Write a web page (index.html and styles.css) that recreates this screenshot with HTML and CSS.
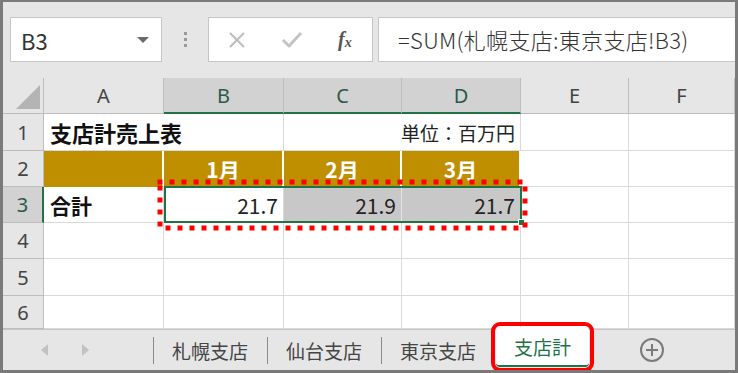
FILE: index.html
```html
<!DOCTYPE html>
<html>
<head>
    <meta charset="utf-8">
    <link rel="stylesheet" href="styles.css">
</head>
<body>
    <div class="frame">
        <div class="topbar">
            <div class="namebox">
                <span>B3</span>
                <span class="caret"></span>
            </div>
            <div class="grip">
                <span></span><span></span><span></span>
            </div>
            <div class="fxbox">
                <svg class="icon" width="22" height="22" viewBox="0 0 22 22" fill="none" stroke="#bdbdbd" stroke-width="2">
                    <path d="M4 4l14 14M18 4L4 18"></path>
                </svg>
                <svg class="icon" width="24" height="22" viewBox="0 0 24 22" fill="none" stroke="#c4c4c4" stroke-width="3" stroke-linejoin="round">
                    <path d="M3 11l6 6L21 4"></path>
                </svg>
                <span class="fx">f<sub>x</sub></span>
            </div>
            <div class="formula">=SUM(札幌支店:東京支店!B3)</div>
        </div>

        <div class="sheet">
            <div class="corner"><span class="tri"></span></div>
            <div class="colhead">A</div>
            <div class="colhead sel">B</div>
            <div class="colhead sel">C</div>
            <div class="colhead sel">D</div>
            <div class="colhead">E</div>
            <div class="colhead">F</div>

            <div class="rowhead">1</div>
            <div class="cell title span2">支店計売上表</div>
            <div class="cell right span2">単位：百万円</div>
            <div class="cell"></div>
            <div class="cell"></div>

            <div class="rowhead">2</div>
            <div class="cell gold"></div>
            <div class="cell gold">1月</div>
            <div class="cell gold">2月</div>
            <div class="cell gold">3月</div>
            <div class="cell"></div>
            <div class="cell"></div>

            <div class="rowhead sel">3</div>
            <div class="cell bold">合計</div>
            <div class="cell num">21.7</div>
            <div class="cell num hl">21.9</div>
            <div class="cell num hl">21.7</div>
            <div class="cell"></div>
            <div class="cell"></div>

            <div class="rowhead">4</div>
            <div class="cell"></div><div class="cell"></div><div class="cell"></div>
            <div class="cell"></div><div class="cell"></div><div class="cell"></div>

            <div class="rowhead">5</div>
            <div class="cell"></div><div class="cell"></div><div class="cell"></div>
            <div class="cell"></div><div class="cell"></div><div class="cell"></div>

            <div class="rowhead">6</div>
            <div class="cell"></div><div class="cell"></div><div class="cell"></div>
            <div class="cell"></div><div class="cell"></div><div class="cell"></div>

            <!-- selection + copy marquee -->
            <div class="selection"><span class="handle"></span></div>
            <svg class="marquee" width="732" height="251">
                <rect x="157" y="104" width="365" height="46" fill="none" stroke="#ff0000" stroke-width="5" stroke-dasharray="0 12" stroke-linecap="square"></rect>
            </svg>
        </div>

        <div class="tabbar">
            <div class="nav">
                <span class="arrow left"></span>
                <span class="arrow right"></span>
            </div>
            <div class="tab">札幌支店</div>
            <div class="tab">仙台支店</div>
            <div class="tab">東京支店</div>
            <div class="tab active">支店計</div>
            <div class="addsheet">
                <svg width="26" height="26" viewBox="0 0 26 26" fill="none" stroke="#7a7a7a" stroke-width="2">
                    <circle cx="13" cy="13" r="11"></circle>
                    <path d="M13 7v12M7 13h12"></path>
                </svg>
            </div>
        </div>
    </div>
</body>
</html>
```

FILE: styles.css
```css
* {
    box-sizing: border-box;
    margin: 0;
    padding: 0;
}

body {
    background-color: #ffffff;
    color: #333333;
    font-family: "Noto Sans CJK JP", "Noto Sans", sans-serif;
}

.frame {
    width: 738px;
    height: 373px;
    border: 3px solid #7a7a7a;
    border-top-width: 2px;
    overflow: hidden;
    position: relative;
    background-color: #e6e6e6;
}

/* formula bar */
.topbar {
    height: 76px;
    display: flex;
    align-items: flex-start;
    padding: 15px 0 0 7px;
    background-color: #e6e6e6;
}

.namebox {
    width: 152px;
    height: 45px;
    background-color: white;
    border: 1px solid #c6c6c6;
    display: flex;
    align-items: center;
    justify-content: space-between;
    padding: 0 12px 0 10px;
    font-size: 22px;
    color: #333;
}

.caret {
    width: 0;
    height: 0;
    border-left: 6px solid transparent;
    border-right: 6px solid transparent;
    border-top: 6px solid #6a6a6a;
}

.grip {
    width: 46px;
    height: 45px;
    display: flex;
    flex-direction: column;
    align-items: center;
    justify-content: center;
    gap: 3px;
}

.grip span {
    width: 3px;
    height: 3px;
    background-color: #9a9a9a;
}

.fxbox {
    width: 165px;
    height: 45px;
    background-color: white;
    border: 1px solid #c6c6c6;
    display: flex;
    align-items: center;
    padding-left: 17px;
    gap: 32px;
}

.fx {
    font-family: "Liberation Serif", serif;
    font-style: italic;
    font-weight: bold;
    font-size: 20px;
    color: #555;
    margin-left: 2px;
}

.fx sub {
    font-size: 14px;
    vertical-align: -1px;
}

.formula {
    flex: 1;
    height: 45px;
    margin-left: 5px;
    background-color: white;
    border: 1px solid #c6c6c6;
    border-right: none;
    font-size: 22px;
    font-weight: 300;
    letter-spacing: 0.3px;
    line-height: 42px;
    padding-left: 19px;
    color: #333;
    white-space: nowrap;
}

/* sheet grid */
.sheet {
    position: relative;
    display: grid;
    grid-template-columns: 41px 120px 120px 118px 119px 108px 1fr;
    grid-template-rows: 36px 37px 36px 36px 36px 37px 33px;
    background-color: white;
    border-bottom: 1px solid #c6c6c6;
    font-size: 21px;
}

.corner {
    background-color: #e6e6e6;
    border-right: 1px solid #bdbdbd;
    border-bottom: 1px solid #bdbdbd;
    position: relative;
}

.tri {
    position: absolute;
    right: 3px;
    bottom: 4px;
    width: 0;
    height: 0;
    border-left: 24px solid transparent;
    border-bottom: 24px solid #b4b4b4;
}

.colhead {
    background-color: #e6e6e6;
    border-right: 1px solid #bdbdbd;
    border-bottom: 1px solid #bdbdbd;
    display: flex;
    align-items: center;
    justify-content: center;
    color: #444;
    font-family: "Noto Sans", sans-serif;
    font-size: 20px;
}

.colhead.sel {
    background-color: #d2d2d2;
    border-bottom: 2px solid #217346;
    color: #2b5a4c;
}

.rowhead {
    background-color: #e6e6e6;
    border-right: 1px solid #bdbdbd;
    border-bottom: 1px solid #bdbdbd;
    display: flex;
    align-items: center;
    justify-content: center;
    color: #444;
    font-family: "Noto Sans", sans-serif;
    font-size: 20px;
}

.rowhead.sel {
    background-color: #d2d2d2;
    border-right: 2px solid #217346;
    color: #2b5a4c;
}

.cell {
    border-right: 1px solid #d9d9d9;
    border-bottom: 1px solid #d9d9d9;
    display: flex;
    align-items: center;
    padding: 0 6px;
    white-space: nowrap;
    color: #222;
}

.span2 {
    grid-column: span 2;
}

.title {
    font-weight: bold;
    font-size: 22px;
    color: #111;
}

.right {
    justify-content: flex-end;
    font-size: 19px;
    padding-right: 5px;
}

.gold {
    background-color: #bf8f00;
    border-right: 2px solid white;
    border-bottom-color: #bf8f00;
    justify-content: center;
    color: white;
    font-weight: bold;
}

.bold {
    font-weight: bold;
    color: #111;
}

.num {
    justify-content: flex-end;
    padding-right: 5px;
}

.hl {
    background-color: #c8c8c8;
    border-right-color: #e4e4e4;
}

.selection {
    position: absolute;
    left: 161px;
    top: 108px;
    width: 358px;
    height: 37px;
    border: 2px solid #217346;
}

.handle {
    position: absolute;
    right: -5px;
    bottom: -5px;
    width: 7px;
    height: 7px;
    background-color: #217346;
    border: 1px solid white;
}

.marquee {
    position: absolute;
    left: 0;
    top: 0;
    pointer-events: none;
}

/* sheet tabs */
.tabbar {
    height: 40px;
    display: flex;
    align-items: stretch;
    background-color: #e6e6e6;
    position: relative;
}

.nav {
    width: 150px;
    display: flex;
    align-items: center;
    gap: 34px;
    padding-left: 38px;
}

.arrow {
    width: 0;
    height: 0;
    border-top: 6px solid transparent;
    border-bottom: 6px solid transparent;
}

.arrow.left {
    border-right: 7px solid #c2c2c2;
}

.arrow.right {
    border-left: 7px solid #c2c2c2;
}

.tab {
    width: 114px;
    display: flex;
    align-items: center;
    justify-content: center;
    font-size: 19px;
    color: #444;
    position: relative;
}

.tab::before {
    content: "";
    position: absolute;
    left: 0;
    top: 7px;
    bottom: 6px;
    border-left: 1px solid #8a8a8a;
}

.tab.active {
    width: 93px;
    margin-left: 1px;
    margin-top: -3px;
    margin-bottom: 3px;
    background-color: white;
    color: #217346;
    border-bottom: 2px solid #217346;
    outline: 4px solid #ff0000;
    outline-offset: 1px;
    border-radius: 4px;
}

.tab.active::before {
    display: none;
}

.addsheet {
    display: flex;
    align-items: center;
    padding-left: 50px;
}
```
